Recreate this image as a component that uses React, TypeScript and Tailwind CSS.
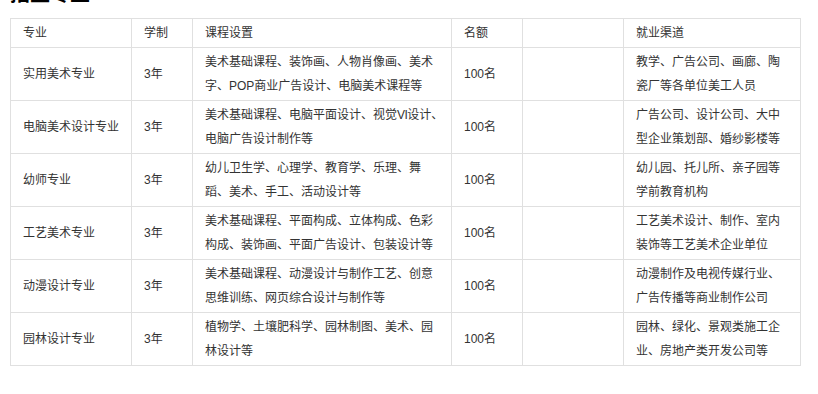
import type { ReactNode } from 'react';

const rows: { major: string; years: string; course: ReactNode; quota: string; job: string }[] = [
  {
    major: '实用美术专业',
    years: '3年',
    course: '美术基础课程、装饰画、人物肖像画、美术字、POP商业广告设计、电脑美术课程等',
    quota: '100名',
    job: '教学、广告公司、画廊、陶瓷厂等各单位美工人员',
  },
  {
    major: '电脑美术设计专业',
    years: '3年',
    course: (
      <>
        美术基础课程、电脑平面设计、视觉<span className="tracking-[-0.5px]">VI</span>设计、电脑广告设计制作等
      </>
    ),
    quota: '100名',
    job: '广告公司、设计公司、大中型企业策划部、婚纱影楼等',
  },
  {
    major: '幼师专业',
    years: '3年',
    course: '幼儿卫生学、心理学、教育学、乐理、舞蹈、美术、手工、活动设计等',
    quota: '100名',
    job: '幼儿园、托儿所、亲子园等学前教育机构',
  },
  {
    major: '工艺美术专业',
    years: '3年',
    course: '美术基础课程、平面构成、立体构成、色彩构成、装饰画、平面广告设计、包装设计等',
    quota: '100名',
    job: '工艺美术设计、制作、室内装饰等工艺美术企业单位',
  },
  {
    major: '动漫设计专业',
    years: '3年',
    course: '美术基础课程、动漫设计与制作工艺、创意思维训练、网页综合设计与制作等',
    quota: '100名',
    job: '动漫制作及电视传媒行业、广告传播等商业制作公司',
  },
  {
    major: '园林设计专业',
    years: '3年',
    course: '植物学、土壤肥科学、园林制图、美术、园林设计等',
    quota: '100名',
    job: '园林、绿化、景观类施工企业、房地产类开发公司等',
  },
];

const cell = 'border border-[#e0e0e0] px-3 py-0.5 align-middle text-left font-normal';
const courseCell = 'border border-[#e0e0e0] pl-3 pr-[7px] py-0.5 align-middle text-left font-normal';

export default function App() {
  return (
    <div className="min-h-screen bg-white pl-[10px] text-[12px] leading-[24px] text-[#333] font-['Liberation_Sans','Noto_Sans_CJK_SC',sans-serif]">
      <div className="h-[18px] overflow-hidden">
        <h3 className="-mt-[16px] text-[20px] leading-[20px] font-bold text-black">招生专业</h3>
      </div>
      <table className="w-[790px] table-fixed border-collapse">
        <colgroup>
          <col className="w-[121px]" />
          <col className="w-[61px]" />
          <col className="w-[259px]" />
          <col className="w-[71px]" />
          <col className="w-[101px]" />
          <col className="w-[177px]" />
        </colgroup>
        <thead>
          <tr>
            <th className={cell}>专业</th>
            <th className={cell}>学制</th>
            <th className={courseCell}>课程设置</th>
            <th className={cell}>名额</th>
            <th className={cell}></th>
            <th className={cell}>就业渠道</th>
          </tr>
        </thead>
        <tbody>
          {rows.map((r) => (
            <tr key={r.major}>
              <td className={cell}>{r.major}</td>
              <td className={cell}>{r.years}</td>
              <td className={courseCell}>{r.course}</td>
              <td className={cell}>{r.quota}</td>
              <td className={cell}></td>
              <td className={cell}>{r.job}</td>
            </tr>
          ))}
        </tbody>
      </table>
    </div>
  );
}
